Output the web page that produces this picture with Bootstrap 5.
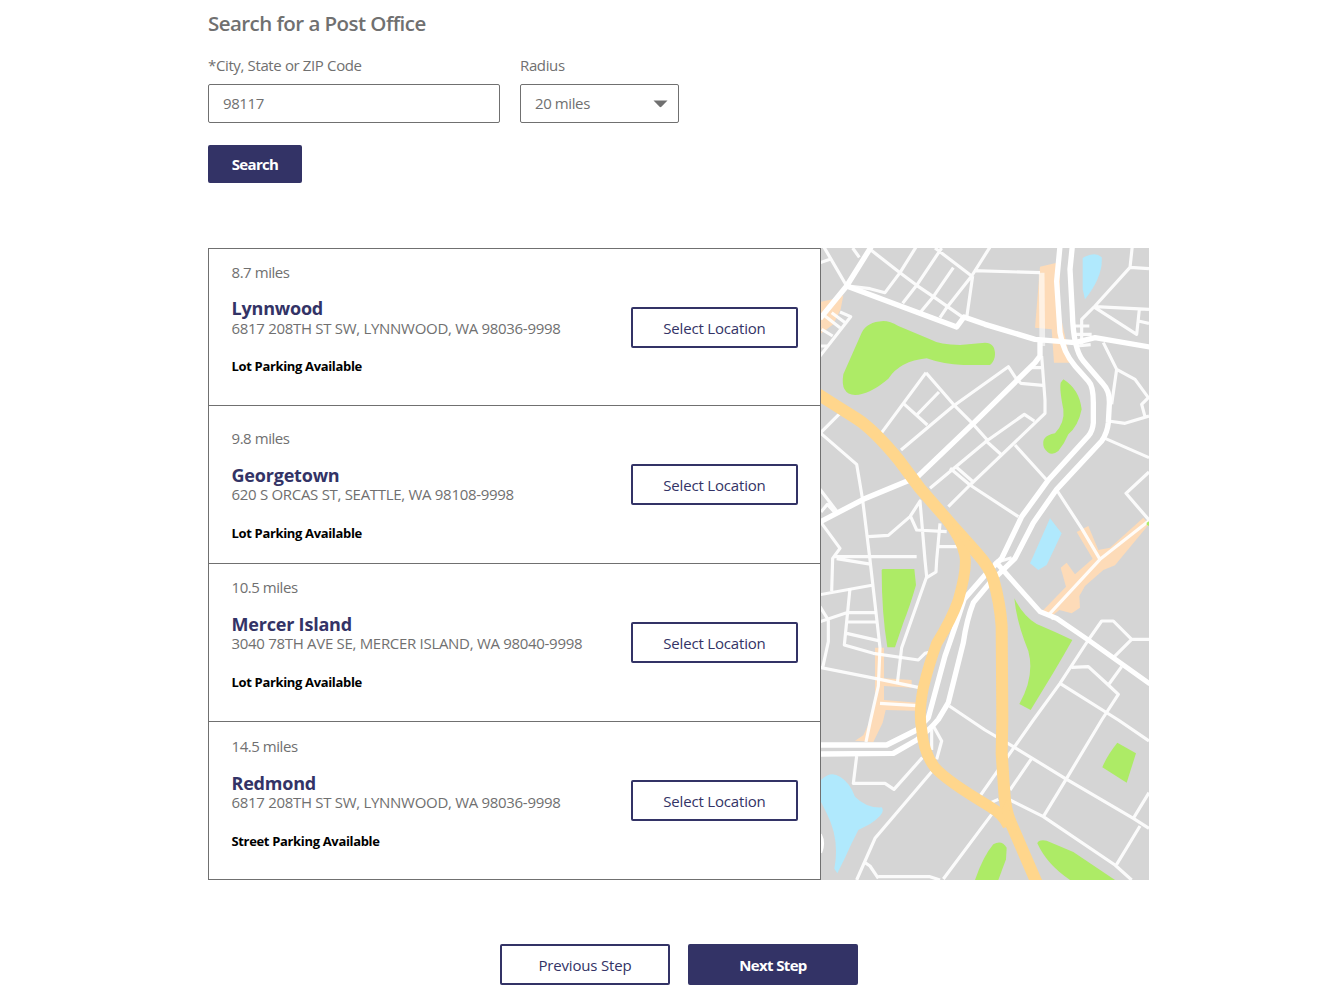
<!DOCTYPE html>
<html lang="en">
<head>
<meta charset="utf-8">
<meta name="viewport" content="width=device-width, initial-scale=1">
<title>Search for a Post Office</title>
<link rel="stylesheet" href="https://cdn.jsdelivr.net/npm/bootstrap@5.3.0/dist/css/bootstrap.min.css">
<style>
  :root { --navy: #333366; --ink: #707070; }
  body { font-family: "Open Sans", "Noto Sans", sans-serif; font-size: 15px; line-height: 20px; color: var(--ink); background: #fff; overflow: hidden; }
  .page-wrap { width: 941px; margin-left: 208px; padding-top: 9px; }
  .page-title { font-size: 20.5px; line-height: 28px; font-weight: 600; letter-spacing: -.55px; color: var(--ink); }
  .finder { margin-top: 18px; }
  .field-row { gap: 20px; }
  .field-label { font-size: 15px; line-height: 20px; letter-spacing: -.37px; margin: 0 0 9px; display: block; }
  .zip-field { width: 292px; }
  .radius-field { width: 159px; }
  .form-control.usps-input, .form-select.usps-input { height: 39px; border: 1px solid var(--ink); border-radius: 2px; color: var(--ink); font-size: 15px; line-height: 20px; letter-spacing: -.4px; padding: 0 14px 2px; background-image: none; }
  .caret-icon { right: 11px; top: 16px; pointer-events: none; }
  .btn.usps-btn { border: 2px solid var(--navy); border-radius: 2px; color: var(--navy); background: #fff; font-size: 15px; line-height: 20px; font-weight: 500; padding: 0; height: 41px; letter-spacing: -.18px; }
  .btn.usps-solid { background: var(--navy); color: #fff; font-weight: 700; letter-spacing: -.65px; }
  .btn.search-btn { width: 94px; height: 38px; margin-top: 22px; }
  .results { margin-top: 65px; height: 632px; }
  .office-list { width: 613px; border: 1px solid var(--ink); }
  .office { height: 158px; padding: 13px 22px 0 22.5px; }
  .office + .office { border-top: 1px solid var(--ink); }
  .office-first { height: 156px; }
  .office-low { padding-top: 22px; }
  .office-mid { padding-top: 14px; }
  .office-dist { letter-spacing: -.45px; }
  .office-name { font-size: 18px; line-height: 20px; font-weight: 700; letter-spacing: -.2px; color: var(--navy); margin: 17px 0 0; }
  .office-addr { line-height: 18px; white-space: nowrap; letter-spacing: -.3px; }
  .office-park { color: #000; font-weight: 700; font-size: 13px; letter-spacing: -.34px; margin-top: 20px; }
  .office-first .office-name { margin: 16px 0 1px; }
  .office-first .office-park { margin-top: 19px; }
  .select-btn { width: 167px; margin-top: 45px; }
  .office-low .select-btn { margin-top: 36px; }
  .office-mid .select-btn { margin-top: 44px; }
  .map-box { width: 328px; height: 632px; }
  .steps { margin: 64px 0 0 292px; gap: 18px; }
  .steps .btn { width: 170px; }
</style>
</head>
<body>
<main class="page-wrap">
  <h1 class="page-title mb-0">Search for a Post Office</h1>
  <form class="finder" onsubmit="return false">
    <div class="d-flex field-row">
      <div class="zip-field">
        <label class="field-label" for="zip">*City, State or ZIP Code</label>
        <input id="zip" class="form-control usps-input" type="text" value="98117">
      </div>
      <div class="radius-field">
        <label class="field-label" for="radius">Radius</label>
        <div class="position-relative">
          <select id="radius" class="form-select usps-input"><option>20 miles</option></select>
          <svg class="caret-icon position-absolute" width="15" height="8" viewBox="0 0 15 8"><path d="M.5 .5h14L8.4 6.8q-.9.9-1.8 0z" fill="#707070"/></svg>
        </div>
      </div>
    </div>
    <button class="btn usps-btn usps-solid search-btn" type="submit">Search</button>
  </form>

  <section class="results d-flex">
    <div class="office-list">
      <article class="office office-first d-flex justify-content-between">
        <div>
          <div class="office-dist">8.7 miles</div>
          <h2 class="office-name">Lynnwood</h2>
          <div class="office-addr">6817 208TH ST SW, LYNNWOOD, WA 98036-9998</div>
          <div class="office-park">Lot Parking Available</div>
        </div>
        <button class="btn usps-btn select-btn">Select Location</button>
      </article>
      <article class="office office-low d-flex justify-content-between">
        <div>
          <div class="office-dist">9.8 miles</div>
          <h2 class="office-name">Georgetown</h2>
          <div class="office-addr">620 S ORCAS ST, SEATTLE, WA 98108-9998</div>
          <div class="office-park">Lot Parking Available</div>
        </div>
        <button class="btn usps-btn select-btn">Select Location</button>
      </article>
      <article class="office d-flex justify-content-between">
        <div>
          <div class="office-dist">10.5 miles</div>
          <h2 class="office-name">Mercer Island</h2>
          <div class="office-addr">3040 78TH AVE SE, MERCER ISLAND, WA 98040-9998</div>
          <div class="office-park">Lot Parking Available</div>
        </div>
        <button class="btn usps-btn select-btn">Select Location</button>
      </article>
      <article class="office office-mid d-flex justify-content-between">
        <div>
          <div class="office-dist">14.5 miles</div>
          <h2 class="office-name">Redmond</h2>
          <div class="office-addr">6817 208TH ST SW, LYNNWOOD, WA 98036-9998</div>
          <div class="office-park">Street Parking Available</div>
        </div>
        <button class="btn usps-btn select-btn">Select Location</button>
      </article>
    </div>
    <svg class="map-box" viewBox="3 6 984 1896" preserveAspectRatio="none" role="img" aria-label="Map">
      <rect x="0" y="0" width="990" height="1902" fill="#d5d5d5"/>
      <!-- built-up areas -->
      <g fill="#fddbb8">
        <path d="M0 168L45 158L70 148L62 190L40 235L0 265Z"/>
        <path d="M660 62L720 48V200L752 350H702L695 250L645 245Z"/>
        <path d="M165 1205H192V1297L275 1302V1325L192 1320V1362L292 1370L285 1394L197 1392L188 1430L160 1488L105 1484L130 1468L150 1425L165 1370Z"/>
        <path d="M770 858L805 840L835 912L870 905L970 815L987 835L885 958L850 972L795 1020L778 1050L780 1085L755 1102L718 1092L690 1115L665 1097L738 1022L722 965L740 950L765 985L818 938Z"/>
      </g>
      <!-- minor streets -->
      <g fill="none" stroke="#fff" stroke-opacity=".9" stroke-width="9.5" stroke-linejoin="round">
        <path d="M10 0L80 120M0 50L30 40M98 6L118 34M150 10L240 80L290 118L340 152L430 215M290 0L240 80L195 140L150 128L85 120M365 6L290 118L248 172M345 6L455 90L512 0M400 65L340 152L300 200M455 90L380 185L360 215M458 90L440 215M462 74L660 80"/>
        <path d="M60 198L92 212L0 330M15 210L60 245M35 200L78 232M5 250L38 270M0 300H25"/>
        <path d="M318 380L250 472L185 560M318 380L400 475M250 472L322 537M357 438L290 507M243 612L400 480L565 362L590 400L603 412L668 418M400 475L455 530L502 582M330 727L500 585L613 505L643 525M385 782L450 717L505 665L675 502V462L665 330M630 365H668M495 582L545 627M390 667L450 717L595 812M405 660L460 708M585 597L680 702"/>
        <path d="M62 500L0 562M0 560L110 655L128 762L150 942L180 1205L175 1320L150 1430L138 1488M0 730L55 802M3 798L22 775L45 800M5 832L60 907L38 937L35 1035M0 1046L160 1017M40 932H290M50 938L155 955M145 872L205 868L270 812L300 765L315 942L320 992L245 1205L232 1312M272 812L290 852L380 857M360 832L350 942L348 978L320 995M355 902H415"/>
        <path d="M90 1027L73 1197L160 1222L295 1242L315 1222L335 1217M0 1127L80 1100H168M82 1128H168M80 1162L175 1184M0 1082L25 1122V1187L8 1265M0 1264L180 1300L298 1325M180 1372L290 1379"/>
        <path d="M937 0L930 64L825 180L785 220V295M930 64L987 68M825 182L987 190M825 185L950 265L958 190M955 225L987 232M762 240H808M765 265H815M770 300L812 296M850 290L890 370L875 475M890 370L945 400L985 455L965 475L975 512M865 525L915 532L987 510M850 575L987 635M987 678L918 742L987 822M712 735L785 847L840 940M990 822L840 940L690 1102L700 1120"/>
        <path d="M805 1182L845 1125H880L935 1180L987 1180M935 1180L880 1235M905 1262L865 1317L805 1262L755 1264M865 1317L895 1345L845 1422L740 1597L670 1712M805 1182L720 1312L640 1422L480 1650M720 1312L895 1422L987 1485M388 1380L495 1452L580 1502L735 1597L940 1717L987 1747M635 1537L570 1632M515 1705L370 1899M570 1662L670 1712L885 1857L935 1902M987 1640L940 1717M960 1740L890 1855M525 950L575 935"/>
        <path d="M110 1530L100 1612L195 1612L222 1630L307 1535M335 1577L165 1777L110 1902M135 1850L150 1860L175 1897M175 1892H330L360 1902M340 1440L365 1485L350 1540M335 1450V1512M500 1675L535 1660"/>
      </g>
      <path d="M665 80L667 300" fill="none" stroke="#fff" stroke-width="17" opacity=".6"/>
      <!-- main roads -->
      <g fill="none" stroke="#fff" stroke-width="16" stroke-linejoin="round">
        <path d="M155 0L80 120L0 218M80 120L410 243L432 213L495 235L645 280L765 290L825 275L990 303M290 695L460 532L645 350L660 330V280M275 700L130 760L0 828"/>
        <path d="M525 945L660 1097L710 1117L805 1182L990 1314" stroke-width="15"/>
        <path d="M720 0L710 106L720 260Q730 320 765 360L805 405Q820 420 820 470V530Q818 555 805 570L685 702L605 812L545 937L500 982L432 1060Q410 1130 375 1230L325 1415L290 1452L200 1497H0"/>
        <path d="M757 0L750 70L757 200Q760 310 790 345L850 415Q870 435 868 475L865 530Q862 560 845 585L710 730L640 830L585 937L510 1010L460 1070Q440 1120 430 1190L385 1370L355 1420Q330 1450 290 1482L220 1522L0 1524"/>
      </g>
      <!-- highway -->
      <g fill="none" stroke="#ffd68c" stroke-linejoin="round">
        <path d="M-10 442L50 480L110 518Q160 550 235 640L300 727L400 842L470 920Q510 965 520 1000Q540 1070 545 1140L547 1417L545 1522L553 1640Q556 1690 570 1725L650 1910" stroke-width="36"/>
        <path d="M380 820Q425 880 434 925Q443 965 415 1062Q395 1120 350 1192Q325 1260 310 1325Q295 1400 305 1450Q310 1520 345 1565Q380 1605 510 1682Q550 1705 565 1740" stroke-width="33"/>
      </g>
      <path d="M545 1690L560 1660L590 1760L560 1745Z" fill="#ffd68c"/>
      <path d="M395 835L470 900L455 920L437 905Z" fill="#ffd68c"/>
      <!-- parks -->
      <g fill="#adeb66">
        <path d="M190 225Q140 228 125 260L70 385Q60 445 105 447Q150 445 205 398Q240 345 320 337Q370 355 430 357L510 357Q525 345 525 325Q525 290 495 290L420 297Q360 297 330 280L235 240Q210 225 190 225Z"/>
        <path d="M730 400Q778 430 785 490Q775 540 745 565Q735 590 715 615Q690 635 672 605Q660 570 705 562Q735 530 730 490Q718 430 722 410Z"/>
        <path d="M188 969H283L288 1017Q270 1080 250 1130L225 1204H202Q185 1100 185 972Z"/>
        <path d="M583 1057Q610 1110 650 1134Q700 1155 757 1182Q730 1230 700 1280L632 1392L598 1374Q645 1290 625 1215Q590 1130 583 1057Z"/>
        <path d="M892 1490L948 1522L920 1610L847 1564Q860 1530 892 1490Z"/>
        <path d="M465 1902Q490 1830 520 1795Q545 1780 560 1805L558 1840L535 1902Z"/>
        <path d="M652 1792Q655 1780 680 1784L760 1818L885 1902H750Q680 1855 652 1792Z"/>
        <path d="M980 830L990 824V842L980 836Z"/>
      </g>
      <!-- water -->
      <g fill="#b0e9fd">
        <path d="M788 36Q825 15 845 34Q850 90 795 160L788 130Z"/>
        <path d="M690 817L725 862L680 957L655 972L630 952L640 930Z"/>
        <path d="M0 1605Q30 1572 60 1592Q90 1610 105 1652Q140 1687 185 1684Q200 1702 150 1734L115 1752Q95 1790 75 1835L52 1882L43 1868Q60 1780 20 1702L0 1662Z"/>
      </g>
      <path d="M1 1765Q14 1790 2 1820" fill="none" stroke="#fff" stroke-width="9"/>
    </svg>
  </section>

  <nav class="steps d-flex" aria-label="Steps">
    <button class="btn usps-btn">Previous Step</button>
    <button class="btn usps-btn usps-solid">Next Step</button>
  </nav>
</main>
<script src="https://cdn.jsdelivr.net/npm/bootstrap@5.3.0/dist/js/bootstrap.bundle.min.js"></script>
</body>
</html>
